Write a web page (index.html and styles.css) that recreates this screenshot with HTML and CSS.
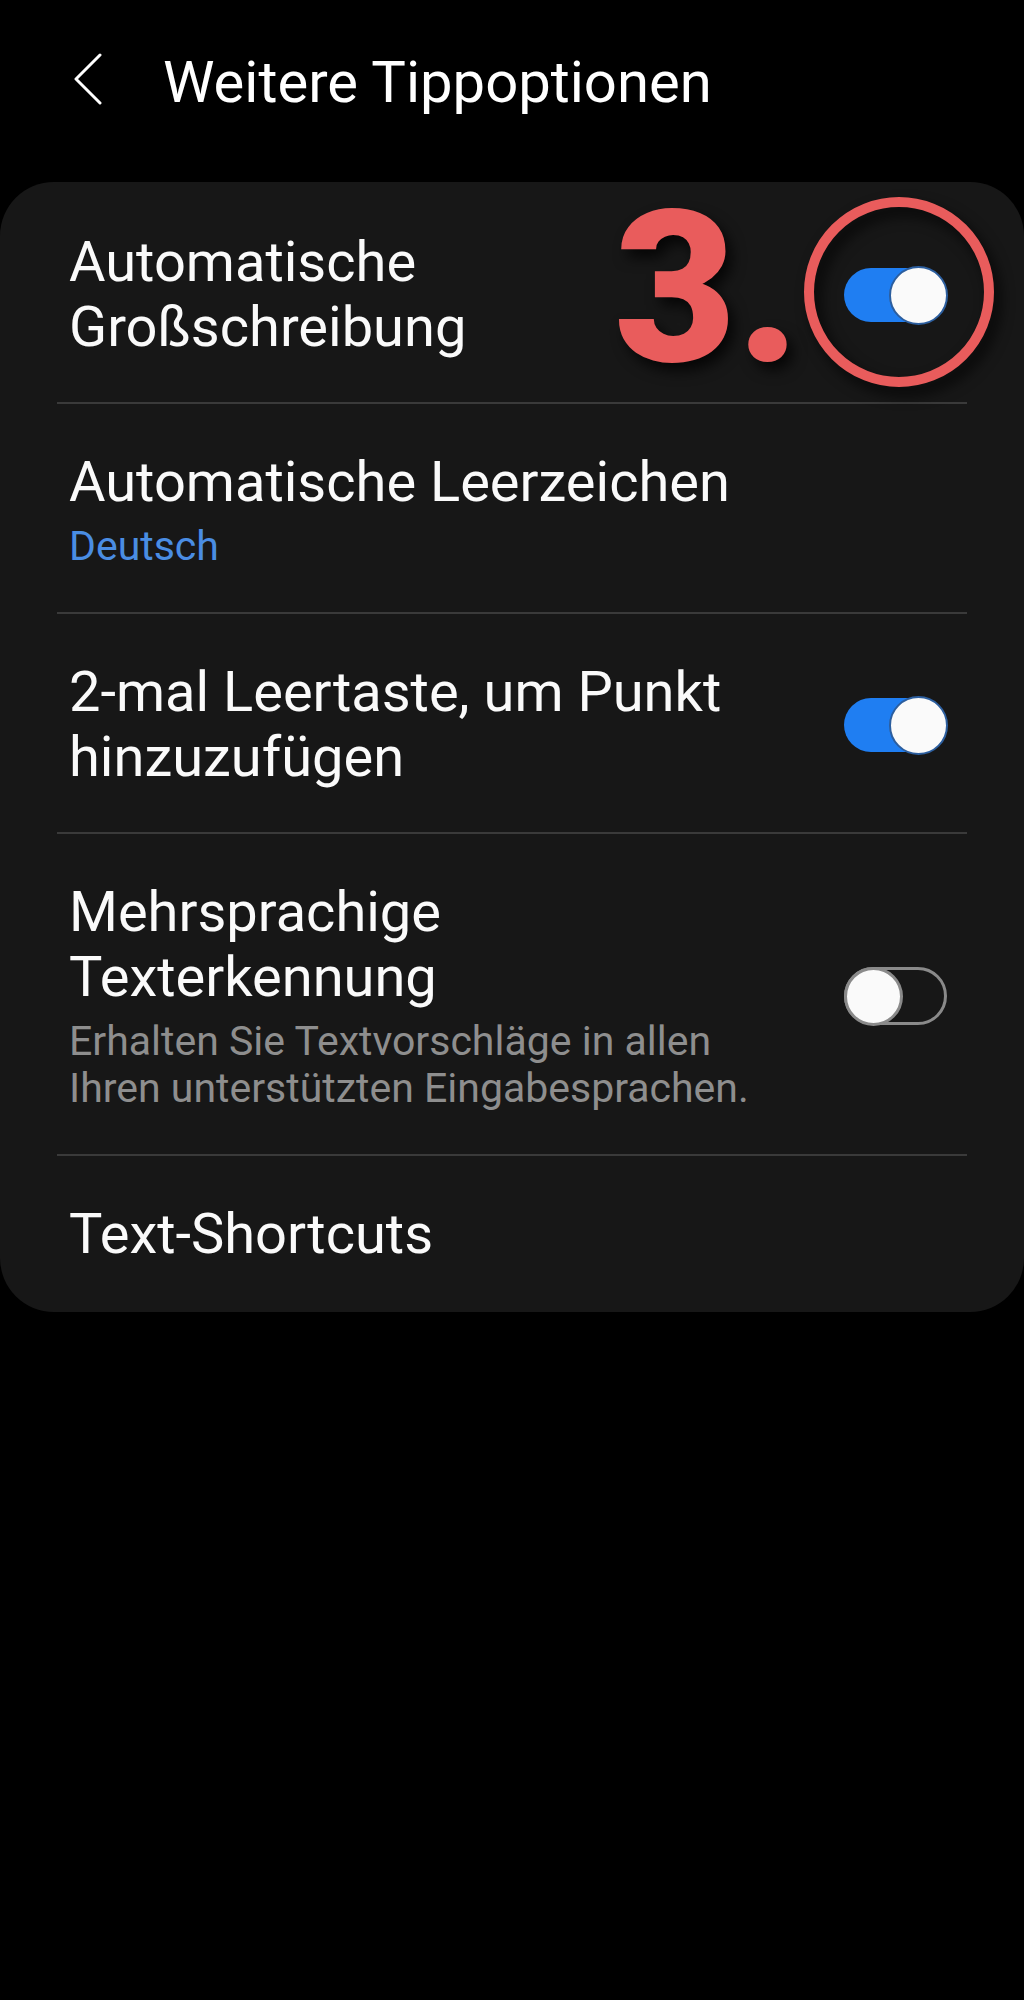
FILE: index.html
```html
<!DOCTYPE html>
<html lang="de">

<head>
    <meta charset="UTF-8">
    <meta name="viewport" content="width=device-width, initial-scale=1.0">
    <title>Weitere Tippoptionen</title>
    <link rel="stylesheet" href="styles.css">
</head>

<body>
    <header class="topbar">
        <svg class="back" width="30" height="52" viewBox="0 0 30 52">
            <polyline points="27,2 3,26 27,50" fill="none" stroke="#fff" stroke-width="3" stroke-linecap="round" stroke-linejoin="round" />
        </svg>
        <h1>Weitere Tippoptionen</h1>
    </header>

    <div class="card">
        <div class="row">
            <div class="row-text">
                <div class="row-title">Automatische Großschreibung</div>
            </div>
            <span class="switch on"><span class="knob"></span></span>
        </div>
        <div class="divider"></div>

        <div class="row">
            <div class="row-text">
                <div class="row-title">Automatische Leerzeichen</div>
                <div class="row-sub accent">Deutsch</div>
            </div>
        </div>
        <div class="divider"></div>

        <div class="row">
            <div class="row-text">
                <div class="row-title">2-mal Leertaste, um Punkt hinzuzufügen</div>
            </div>
            <span class="switch on"><span class="knob"></span></span>
        </div>
        <div class="divider"></div>

        <div class="row">
            <div class="row-text">
                <div class="row-title">Mehrsprachige Texterkennung</div>
                <div class="row-sub">Erhalten Sie Textvorschläge in allen Ihren unterstützten Eingabesprachen.</div>
            </div>
            <span class="switch off"><span class="knob"></span></span>
        </div>
        <div class="divider"></div>

        <div class="row last">
            <div class="row-text">
                <div class="row-title">Text-Shortcuts</div>
            </div>
        </div>

        <!-- step marker drawn over the first toggle -->
        <div class="step-number">3.</div>
        <div class="step-ring"></div>
    </div>
</body>

</html>
```

FILE: styles.css
```css
body {
    margin: 0;
    min-height: 2000px;
    background: #000;
    font-family: Roboto, "Liberation Sans", sans-serif;
    color: #fafafa;
}

.topbar {
    display: flex;
    align-items: flex-start;
    box-sizing: border-box;
    height: 182px;
    padding: 48px 0 0 73px;
}

.back {
    margin-top: 5px;
    flex-shrink: 0;
}

.topbar h1 {
    margin: 0 0 0 60px;
    font-size: 58px;
    font-weight: 400;
    line-height: normal;
    color: #fff;
}

.card {
    position: relative;
    background: #171717;
    border-radius: 54px;
    padding-bottom: 3px;
}

.row {
    display: flex;
    align-items: center;
    gap: 75px;
    padding: 46px 77px 42px 69px;
}

.row:first-child {
    padding-top: 48px;
}

.row-text {
    flex: 1;
}

.row-title {
    font-size: 56px;
    line-height: 65px;
}

.row-sub {
    margin-top: 8px;
    font-size: 41px;
    line-height: 47px;
    color: #8e8e8e;
}

.row-sub.accent {
    color: #4a8de3;
}

.divider {
    height: 2px;
    margin: 0 57px;
    background: #3a3a3a;
}

.switch {
    display: flex;
    align-items: center;
    flex-shrink: 0;
    box-sizing: border-box;
    width: 103px;
    height: 54px;
    border-radius: 27px;
}

.switch.on {
    background: #1f7ef2;
    justify-content: flex-end;
}

.switch.off {
    height: 58px;
    border: 3px solid #8a8a8a;
    border-radius: 29px;
    justify-content: flex-start;
}

.knob {
    flex-shrink: 0;
    box-sizing: border-box;
    width: 59px;
    height: 59px;
    border-radius: 50%;
    background: #fafafa;
}

.on .knob {
    border: 2px solid #2c5e9e;
    margin-right: -1px;
}

.off .knob {
    border: 3px solid #8a8a8a;
    margin-left: -3px;
}

.step-number {
    position: absolute;
    left: 614px;
    top: 2px;
    font-family: Roboto, sans-serif;
    font-size: 211px;
    font-weight: 900;
    line-height: 1;
    color: #e95c5c;
    filter: drop-shadow(6px 8px 7px rgba(0, 0, 0, 0.75));
}

.step-ring {
    position: absolute;
    left: 804px;
    top: 15px;
    box-sizing: border-box;
    width: 190px;
    height: 190px;
    border: 10px solid #e95c5c;
    border-radius: 50%;
    filter: drop-shadow(6px 8px 7px rgba(0, 0, 0, 0.75));
}
```
